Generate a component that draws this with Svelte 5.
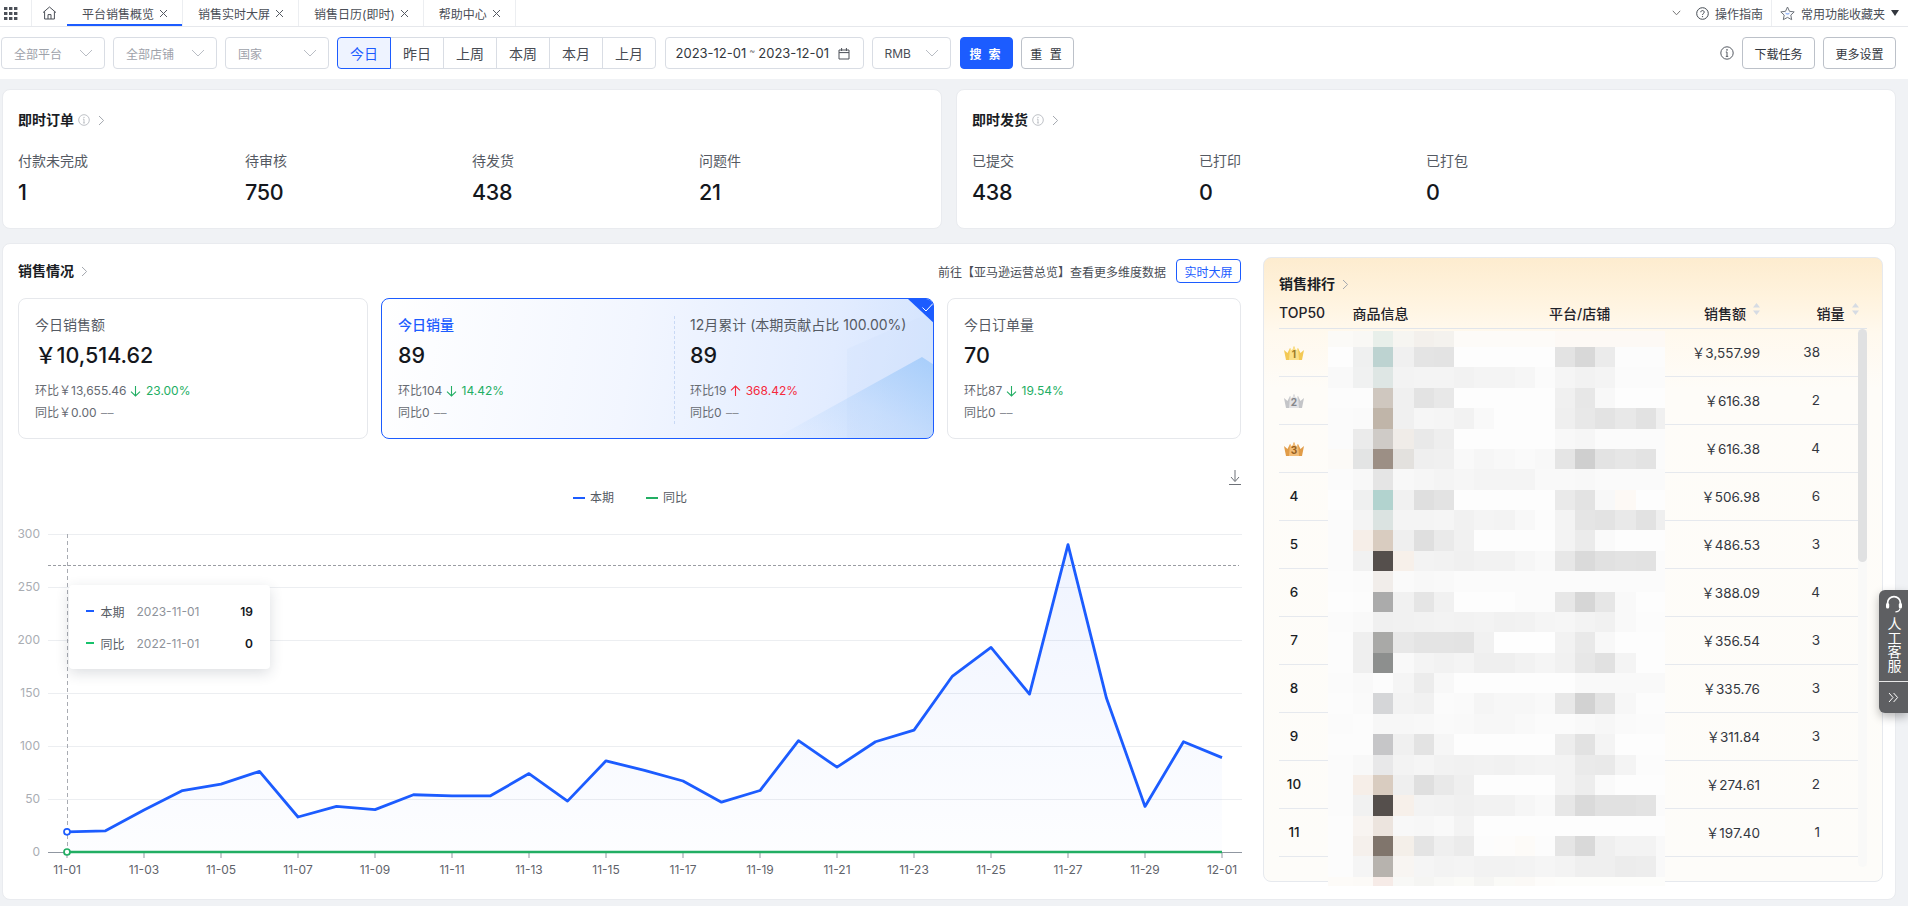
<script>
  const tabs = [
    { t: '平台销售概览', on: true },
    { t: '销售实时大屏' },
    { t: '销售日历(即时)' },
    { t: '帮助中心' }
  ];
  const ranges = ['今日', '昨日', '上周', '本周', '本月', '上月'];
  const orders = [['付款未完成', '1'], ['待审核', '750'], ['待发货', '438'], ['问题件', '21']];
  const ships = [['已提交', '438'], ['已打印', '0'], ['已打包', '0']];
  const vals = [19,20,39.6,58,64,76,33,43,40,54,53,53,74,48,86,77,67,47,58,105,80,104,115,166,193,149,290,145,43,104,89];
  const X0 = 67, STEP = 38.5, Y0 = 852, K = 1.06;
  const px = (i) => X0 + i * STEP;
  const py = (v) => Y0 - v * K;
  const line = vals.map((v, i) => `${px(i)},${py(v)}`).join(' ');
  const area = `${px(0)},${Y0} ${line} ${px(30)},${Y0}`;
  const yTicks = [0, 50, 100, 150, 200, 250, 300];
  const xLabels = ['11-01','11-03','11-05','11-07','11-09','11-11','11-13','11-15','11-17','11-19','11-21','11-23','11-25','11-27','11-29','12-01'];
  const xTickAt = xLabels.map((_, i) => i * 2);
  const rows = [
    { r: 1, a: '3,557.99', n: 38 }, { r: 2, a: '616.38', n: 2 }, { r: 3, a: '616.38', n: 4 },
    { r: 4, a: '506.98', n: 6 }, { r: 5, a: '486.53', n: 3 }, { r: 6, a: '388.09', n: 4 },
    { r: 7, a: '356.54', n: 3 }, { r: 8, a: '335.76', n: 3 }, { r: 9, a: '311.84', n: 3 },
    { r: 10, a: '274.61', n: 2 }, { r: 11, a: '197.40', n: 1 }
  ];
  const crown = { 1: ['#fae08a', '#f3c955', '#9a7a26'], 2: ['#e2e2e4', '#c4c5c8', '#85868a'], 3: ['#f2bd78', '#e19c48', '#96601e'] };
  const mosaicSrc = [
    'fbfaf7 f9f8f5 e8efea f6f5f1 f3f0ec f4f2ee fdfbf8 fdfbf8 fdfbf8 fdfbf8 fdfbf8 fdf9f5 fdf9f5 fdf9f5 fdf9f5 fdf9f5 fdf9f5',
    'fd eff0f0 bdd3d1 f0 e4 e3 fd fd fd fd fd e3 d8 eb fc fc fc',
    'f9 f0f1f1 dee6e4 f3 f4 f4 f2 f4 f4 f6 fb f5 f2 f4 fb fb fb',
    'fc fc cfc7bf f0 e3 e8 fd fd fd fd fd f0 e7 f8 fd fd fd',
    'fb fa c0b5a9 f0 f6 f5 f2 f9 fd fd fd ef e8 e3 e8 e2 f0',
    'fb eb cfcbc7 f0ece8 e9 ee fd fd fd fd fd f8 f6 fb fb fb fb',
    'fcfaf7 e3e4e4 9c8f85 e3e1de ef f0 f9 f6 f8 fa f8 e5 cf e3 e6 e3 fb',
    'fb f8 e5 f8 f6 f4 f6 f4 f4 f4 f9 f9 f8 fa fa fa fa',
    'fd eff0f0 b2d3cf f1 df e3 fd fd fd fd fd ea e3 f8 fdf9f5 fd fd',
    'fb f4 dbe3e1 f4 f4 f5 f1 f4 f3 f8 fc f3 e5 e3 e9 e2 ef',
    'fb f6eee8 d9ccc0 ef df ea f1 fd fd fd fd f3 eb fa fd fd fd',
    'fb f1 554f4c f7f0ea f3 f2 f0 f2 f2 f6 f9 e7 da e1 e3 e2 fb',
    'fc fb f1edea fa f8 f9 fb fb fb fb fb fb fb fb fb fb fb',
    'fd fc ab f1 e5 f1 fd fd fd fb fb e7 d6 e6 f9 fd fd',
    'fb f9 f0 f1 f2 f3 f2 f3 f1 f2 f5 f6 f3 f1 f9 fc fc',
    'fc ef a9a9a7 e8 e4 e4 e3 f1 fe fe fe f2 e9 f8 fd fd fd',
    'fc ef 8d8f8e f9 f4 f2 f4 ef ef f2 f5 f1 e7 e1 f4 fd fd',
    'fb f9 fc f5 ec f8 fd fd fd fd fd fd f9 f9 f9 f9 f9',
    'fc fa d5d6d8 f3 f1 fb fa f5 f7 f7 f9 e8 d2 e3 f7 fc fc',
    'fb fc f7 f7 f8 fa f9 f7 f7 f9 fb fb f9 f7 fa fb fb',
    'fc fc c6c6c8 f0 e3 f6 fd fd fd fd fd ed e2 f4 fd fd fd',
    'fb f8 e8e8e9 f3 f5 f2 f1 f2 f1 f3 f4 f3 ea e9 f4 fc fc',
    'fb f6eee8 d9ccc0 ef df e9 ef fd fd fd fd f3 ed fa fd fd fd',
    'fb f1 554f4c f7f0ea f3 f2 f0 f2 f2 f6 f9 e7 da e1 e1 e3 fb',
    'fc f8f4f1 ece4de f8 f7 f9 f3 fd fd fd fd fd fd fd fd fd fd',
    'fc f5f0ec 80756c f4efe9 e4 ef eb fc fdfcfb fdfbf8 fc e5 d9 ef f3 f3 f9',
    'fc f5 b7b3ae f8f5f2 f5 f3 f4 f2 f2 f3 f5 f3 ef ef ec ed f9',
    'fdfbf8 fcfaf7 f6ebe7 f8f8f6 f5f5f3 f8f8f6 fafaf7 f5f5f3 fafaf7 fbf9f6 fdfcfa fdfdfb fdfdfb fdfdfb fdfdfb fdfdfb fdfdfb'
  ];
  const hex = (tk) => (tk.length === 2 ? `#${tk}${tk}${tk}` : `#${tk}`);
  const mosaic = mosaicSrc.flatMap((r) => r.split(' ').map(hex));
</script>

{#snippet chev()}
  <svg class="chev" width="7" height="11" viewBox="0 0 7 11"><path d="M1 1l4.6 4.5L1 10" fill="none" stroke="#a4a8af" stroke-width="1"/></svg>
{/snippet}
{#snippet info(size = 12, color = '#b4b8be')}
  <svg width={size} height={size} viewBox="0 0 14 14"><circle cx="7" cy="7" r="6.2" fill="none" stroke={color}/><path d="M7 6v4.2M5.8 10.4h2.4M5.8 6h1.2" fill="none" stroke={color}/><circle cx="7" cy="3.9" r=".8" fill={color}/></svg>
{/snippet}
{#snippet down()}
  <svg class="arr" width="11" height="12" viewBox="0 0 11 12"><path d="M5.5 1v10M1 6.6l4.5 4.4L10 6.6" fill="none" stroke="#22ae63" stroke-width="1.1"/></svg>
{/snippet}
{#snippet up()}
  <svg class="arr" width="11" height="12" viewBox="0 0 11 12"><path d="M5.5 11V1M1 5.4L5.5 1 10 5.4" fill="none" stroke="#f5293d" stroke-width="1.1"/></svg>
{/snippet}
{#snippet caret()}
  <svg width="14" height="8" viewBox="0 0 14 8"><path d="M1 1l6 6 6-6" fill="none" stroke="#b9bdc4" stroke-width="1"/></svg>
{/snippet}
{#snippet sort()}
  <svg class="sort" width="7" height="12" viewBox="0 0 7 12"><path d="M3.5 0L7 4.4H0zM3.5 12L0 7.6h7z" fill="#d6dbe3"/></svg>
{/snippet}

<div class="page">
  <header class="topbar">
    <div class="appicon">
      <svg width="14" height="13" viewBox="0 0 14 13" fill="#4c5058">
        <rect x="0" y="0" width="3.4" height="3"/><rect x="5" y="0" width="3.4" height="3"/><rect x="10" y="0" width="3.4" height="3"/>
        <rect x="0" y="5" width="3.4" height="3"/><rect x="5" y="5" width="3.4" height="3"/><rect x="10" y="5" width="3.4" height="3"/>
        <rect x="0" y="10" width="3.4" height="3"/><rect x="5" y="10" width="3.4" height="3"/><rect x="10" y="10" width="3.4" height="3"/>
      </svg>
    </div>
    <div class="homeicon">
      <svg width="15" height="14" viewBox="0 0 15 14"><path d="M1 6.6L7.5 1 14 6.6M2.6 5.4V13h9.8V5.4M6 13V8.6h3V13" fill="none" stroke="#4c5058" stroke-width="1"/></svg>
    </div>
    {#each tabs as tab}
      <div class="tab" class:on={tab.on}>
        <span>{tab.t}</span>
        <svg width="9" height="9" viewBox="0 0 9 9"><path d="M1 1l7 7M8 1L1 8" stroke="#555a62" stroke-width="1"/></svg>
      </div>
    {/each}
    <div class="topright">
      <svg class="tchev" width="9" height="6" viewBox="0 0 9 6"><path d="M.8.8l3.7 4 3.7-4" fill="none" stroke="#777" stroke-width="1"/></svg>
      <span class="guide">
        <svg width="13" height="13" viewBox="0 0 13 13"><circle cx="6.5" cy="6.5" r="5.8" fill="none" stroke="#444a52"/><path d="M4.8 5.2c0-2.2 3.4-2.2 3.4 0 0 1.3-1.7 1.3-1.7 2.8" fill="none" stroke="#444a52"/><circle cx="6.5" cy="9.6" r=".7" fill="#444a52"/></svg>
        操作指南
      </span>
      <span class="fav">
        <svg width="15" height="15" viewBox="0 0 15 15"><path d="M7.5 1l2 4.3 4.7.6-3.4 3.2.9 4.6-4.2-2.3-4.2 2.3.9-4.6L.8 5.9l4.7-.6z" fill="#fafbfd" stroke="#6f747b" stroke-width="1"/><path d="M5.6 7.2c.9 1 2.9 1 3.8 0" fill="none" stroke="#5a8cf5" stroke-width="1"/></svg>
        常用功能收藏夹
        <svg width="8" height="6" viewBox="0 0 8 6"><path d="M0 0h8L4 6z" fill="#33373e"/></svg>
      </span>
    </div>
  </header>

  <div class="toolbar">
    <div class="select ph"><span>全部平台</span>{@render caret()}</div>
    <div class="select ph"><span>全部店铺</span>{@render caret()}</div>
    <div class="select ph"><span>国家</span>{@render caret()}</div>
    <div class="seg">
      {#each ranges as r, i}
        <div class="segitem" class:on={i === 0}>{r}</div>
      {/each}
    </div>
    <div class="date">
      <span>2023-12-01</span><i>~</i><span>2023-12-01</span>
      <svg width="12" height="13" viewBox="0 0 12 13"><path d="M1 3h10v9H1zM1 5.6h10M3.6 1v3M8.4 1v3" fill="none" stroke="#4c5058"/></svg>
    </div>
    <div class="select rmb"><span>RMB</span>{@render caret()}</div>
    <button class="btn primary">搜 索</button>
    <button class="btn spaced">重 置</button>
    <div class="tool-right">
      {@render info(14, '#555a62')}
      <button class="btn wide">下载任务</button>
      <button class="btn wide">更多设置</button>
    </div>
  </div>

  <div class="summary">
    <section class="card">
      <h3>即时订单 <span class="ic">{@render info()}</span>{@render chev()}</h3>
      <div class="stats">
        {#each orders as o}
          <div class="stat"><div class="lab">{o[0]}</div><div class="num">{o[1]}</div></div>
        {/each}
      </div>
    </section>
    <section class="card">
      <h3>即时发货 <span class="ic">{@render info()}</span>{@render chev()}</h3>
      <div class="stats">
        {#each ships as o}
          <div class="stat"><div class="lab">{o[0]}</div><div class="num">{o[1]}</div></div>
        {/each}
      </div>
    </section>
  </div>

  <section class="sales">
    <div class="leftcol">
      <div class="saleshead">
        <h3>销售情况 {@render chev()}</h3>
        <div class="goto">
          <span>前往【亚马逊运营总览】查看更多维度数据</span>
          <button class="live">实时大屏</button>
        </div>
      </div>
      <div class="kpis">
        <div class="kpi">
          <div class="kt">今日销售额</div>
          <div class="kv">￥10,514.62</div>
          <div class="ks first">环比￥13,655.46 {@render down()}<b class="g">23.00%</b></div>
          <div class="ks">同比￥0.00 <em>––</em></div>
        </div>
        <div class="kpi active">
          <svg class="deco" width="552" height="141" viewBox="0 0 552 141" preserveAspectRatio="none">
            <defs>
              <linearGradient id="dg" x1="0" y1="1" x2="1" y2="0"><stop offset="0" stop-color="#9cc8fa" stop-opacity="0"/><stop offset=".5" stop-color="#9cc8fa" stop-opacity=".28"/><stop offset="1" stop-color="#9cc8fa" stop-opacity=".8"/></linearGradient>
            </defs>
            <path d="M465 50L552 12V141H465z" fill="#cfe2fd" opacity=".3"/>
            <path d="M390 141L540 58 552 66V141z" fill="url(#dg)"/>
            <path d="M526 0h27v25z" fill="#1c5cff"/>
            <path d="M540.5 8.5l3.5 3.5 6.5-7" fill="none" stroke="#fff" stroke-width="1"/>
          </svg>
          <div class="kcol left">
            <div class="kt blue">今日销量</div>
            <div class="kv">89</div>
            <div class="ks first">环比104 {@render down()}<b class="g">14.42%</b></div>
            <div class="ks">同比0 <em>––</em></div>
          </div>
          <div class="kcol right">
            <div class="kt">12月累计 (本期贡献占比 100.00%)</div>
            <div class="kv">89</div>
            <div class="ks first">环比19 {@render up()}<b class="r">368.42%</b></div>
            <div class="ks">同比0 <em>––</em></div>
          </div>
        </div>
        <div class="kpi">
          <div class="kt">今日订单量</div>
          <div class="kv">70</div>
          <div class="ks first">环比87 {@render down()}<b class="g">19.54%</b></div>
          <div class="ks">同比0 <em>––</em></div>
        </div>
      </div>
      <div class="chart">
        <svg width="1225" height="461" viewBox="18 439 1225 461">
          <defs>
            <linearGradient id="af" x1="0" y1="0" x2="0" y2="1"><stop offset="0" stop-color="#1c5cff" stop-opacity=".07"/><stop offset="1" stop-color="#1c5cff" stop-opacity=".01"/></linearGradient>
          </defs>
          <path d="M1235 470v11M1231 477l4 4.6 4-4.6M1229 484.5h12" fill="none" stroke="#6d7178" stroke-width="1"/>
          <rect x="573" y="497" width="12" height="2" fill="#1c5cff"/>
          <text x="590" y="502" class="lg">本期</text>
          <rect x="646" y="497" width="12" height="2" fill="#22ae63"/>
          <text x="663" y="502" class="lg">同比</text>
          {#each yTicks as t}
            {#if t > 0}<line x1="48" x2="1242" y1={Y0 - t * K + .5} y2={Y0 - t * K + .5} stroke="#eceef1"/>{/if}
            <text x="40" y={Y0 - t * K + 4} class="yl" text-anchor="end">{t}</text>
          {/each}
          <line x1="48" x2="1239" y1="565.5" y2="565.5" stroke="#9a9da3" stroke-dasharray="3 2"/>
          <polygon points={area} fill="url(#af)"/>
          <line x1="67.5" x2="67.5" y1="534" y2="852" stroke="#a8abb2" stroke-dasharray="4 3"/>
          <line x1="48" x2="1242" y1="852.5" y2="852.5" stroke="#9097a1"/>
          {#each xTickAt as i, k}
            <line x1={px(i)} x2={px(i)} y1="853" y2="858" stroke="#9097a1"/>
            <text x={px(i)} y="874" class="xl" text-anchor="middle">{xLabels[k]}</text>
          {/each}
          <polyline points={line} fill="none" stroke="#1c5cff" stroke-width="2.8" stroke-linejoin="round"/>
          <line x1={px(0)} x2={px(30)} y1="852" y2="852" stroke="#22ae63" stroke-width="2.6"/>
          <circle cx={px(0)} cy={py(19)} r="3" fill="#fff" stroke="#1c5cff" stroke-width="1.7"/>
          <circle cx={px(0)} cy={Y0} r="3" fill="#fff" stroke="#22ae63" stroke-width="1.7"/>
        </svg>
        <div class="tip">
          <div class="tr"><i class="blue-bar"></i><span class="tn">本期</span><span class="td">2023-11-01</span><b>19</b></div>
          <div class="tr"><i class="green-bar"></i><span class="tn">同比</span><span class="td">2022-11-01</span><b>0</b></div>
        </div>
      </div>
    </div>

    <aside class="rank">
      <h3>销售排行 {@render chev()}</h3>
      <div class="thead">
        <span>TOP50</span><span>商品信息</span><span>平台/店铺</span>
        <span>销售额 {@render sort()}</span><span>销量 {@render sort()}</span>
      </div>
      <div class="tbody">
        <div class="trows">
          {#each rows as row}
            <div class="trow">
              <div class="rk">
                {#if row.r <= 3}
                  <svg width="22" height="16" viewBox="0 0 22 16">
                    <path d="M1 5L4.5 8 7 3 9 6 11 1 13 6 15 3 17.5 8 21 5 19 15H3z" fill={crown[row.r][1]}/>
                    <path d="M7 3L9 6 11 1 13 6 15 3 16 15H6z" fill={crown[row.r][0]}/>
                    <text x="11" y="13.4" text-anchor="middle" class="cn" fill={crown[row.r][2]}>{row.r}</text>
                  </svg>
                {:else}
                  {row.r}
                {/if}
              </div>
              <div class="amt">￥{row.a}</div>
              <div class="cnt">{row.n}</div>
            </div>
          {/each}
        </div>
        <div class="track"><div class="thumb"></div></div>
      </div>
    </aside>

    <div class="mosaic">
      {#each mosaic as c}
        <div style="background:{c}"></div>
      {/each}
    </div>
  </section>

  <div class="service">
    <div class="svc">
      <svg width="18" height="19" viewBox="0 0 18 19"><path d="M2.6 11V8a6.4 6.4 0 0 1 12.8 0v3" fill="none" stroke="#fff" stroke-width="1.7"/><rect x="1" y="8" width="3.2" height="5.6" rx="1.5" fill="#fff"/><rect x="13.8" y="8" width="3.2" height="5.6" rx="1.5" fill="#fff"/><path d="M15 13.6c-.4 2.2-2.2 3.2-4.6 3.2" fill="none" stroke="#fff" stroke-width="1.2"/></svg>
      <span>人工客服</span>
    </div>
    <div class="fold">
      <svg width="11" height="11" viewBox="0 0 11 11"><path d="M1 1l4 4.5L1 10M5.6 1l4 4.5-4 4.5" fill="none" stroke="#fff" stroke-width="1"/></svg>
    </div>
  </div>
</div>

<style>
  :global(body) { margin: 0; }
  .page {
    position: relative;
    width: 1908px;
    height: 906px;
    overflow: hidden;
    background: #f0f2f5;
    font-family: Inter, "Noto Sans CJK SC", sans-serif;
    color: #1a1d24;
    box-sizing: border-box;
  }
  h3 {
    margin: 0;
    display: flex;
    align-items: center;
    font-size: 14px;
    line-height: 18px;
    font-weight: 600;
    color: #1a1d24;
  }
  .chev { margin-left: 7px; }
  .ic { display: inline-flex; margin-left: 4px; margin-right: 1px; }

  .topbar {
    display: flex;
    align-items: stretch;
    height: 27px;
    box-sizing: border-box;
    background: #fff;
    border-bottom: 1px solid #e6e8ec;
    font-size: 12px;
    color: #4a4e56;
  }
  .appicon { width: 32px; box-sizing: border-box; border-right: 1px solid #eceef1; display: flex; align-items: center; padding-left: 4px; }
  .homeicon { width: 35px; display: flex; align-items: center; justify-content: center; }
  .tab {
    display: flex;
    align-items: center;
    gap: 5px;
    padding: 0 14px 0 15px;
    border-right: 1px solid #eceef1;
    height: 26px;
    box-sizing: border-box;
    white-space: nowrap;
  }
  .tab.on { box-shadow: inset 0 -2px 0 #1c5cff; }
  .topright { margin-left: auto; display: flex; align-items: center; padding-right: 9px; }
  .tchev { margin-right: 15px; }
  .guide { display: flex; align-items: center; gap: 6px; padding-right: 8px; border-right: 1px solid #eceef1; height: 26px; }
  .fav { display: flex; align-items: center; gap: 6px; padding-left: 8px; }

  .toolbar {
    display: flex;
    align-items: center;
    height: 52px;
    box-sizing: border-box;
    padding: 0 12px 0 1px;
    background: #fff;
    font-size: 12px;
  }
  .select {
    display: flex;
    align-items: center;
    justify-content: space-between;
    width: 103.5px;
    height: 32px;
    margin-right: 8.5px;
    box-sizing: border-box;
    padding: 0 11px 0 12px;
    border: 1px solid #d9dde4;
    border-radius: 4px;
    color: #9ea2aa;
  }
  .rmb { width: 79px; margin-left: 8px; color: #4a4e56; margin-right: 9px; }
  .seg { display: flex; height: 32px; border-radius: 4px; }
  .segitem {
    width: 54px;
    display: flex;
    align-items: center;
    justify-content: center;
    box-sizing: border-box;
    margin-left: -1px;
    border: 1px solid #d9dde4;
    font-size: 14px;
    color: #474b53;
  }
  .segitem:first-child { margin-left: 0; border-radius: 4px 0 0 4px; }
  .segitem:last-child { border-radius: 0 4px 4px 0; }
  .segitem.on { background: #eef3ff; border-color: #1c5cff; color: #1c5cff; position: relative; z-index: 1; }
  .date {
    display: flex;
    align-items: center;
    width: 199px;
    height: 32px;
    margin-left: 8.5px;
    box-sizing: border-box;
    padding: 0 10px;
    border: 1px solid #d9dde4;
    border-radius: 4px;
    font-size: 13px;
    color: #33373e;
    white-space: nowrap;
  }
  .date i { font-style: normal; font-size: 9px; width: 12px; text-align: center; position: relative; top: -3px; color: #777; }
  .date svg { margin-left: auto; margin-right: 3px; }
  .btn {
    height: 32px;
    width: 53px;
    padding: 0;
    box-sizing: border-box;
    border: 1px solid #bcc1c9;
    border-radius: 4px;
    background: #fff;
    font: inherit;
    font-size: 12px;
    color: #33373e;
    margin-right: 8px;
  }
  .btn.primary { background: #1c5cff; border-color: #1c5cff; color: #fff; font-weight: 600; letter-spacing: 2px; }
  .btn.spaced { letter-spacing: 2px; }
  .btn.wide { width: 73px; margin-right: 0; }
  .tool-right { margin-left: auto; display: flex; align-items: center; gap: 8px; }

  .summary {
    display: grid;
    grid-template-columns: 940px 940px;
    column-gap: 14px;
    margin: 10px 0 0 2px;
  }
  .card {
    height: 140px;
    box-sizing: border-box;
    padding: 21px 15px 0;
    background: #fff;
    border: 1px solid #e9ebef;
    border-radius: 8px;
  }
  .stats { display: grid; grid-template-columns: repeat(4, 227px); margin-top: 22px; }
  .lab { font-size: 14px; line-height: 20px; color: #555a63; }
  .num { font-size: 21.5px; line-height: 28px; margin-top: 7px; font-weight: 500; color: #14171d; letter-spacing: -.3px; }

  .sales {
    position: relative;
    display: flex;
    align-items: flex-start;
    width: 1894px;
    height: 657px;
    margin: 14px 0 0 2px;
    box-sizing: border-box;
    padding-left: 15px;
    background: #fff;
    border: 1px solid #e9ebef;
    border-radius: 8px;
  }
  .leftcol { width: 1223px; flex: none; }
  .saleshead { display: flex; justify-content: space-between; align-items: center; height: 54px; }
  .goto { display: flex; align-items: center; gap: 10px; font-size: 12px; color: #4a4e56; }
  .live {
    width: 65px;
    height: 24px;
    padding: 0;
    background: #fff;
    border: 1px solid #1c5cff;
    border-radius: 4px;
    font: inherit;
    font-size: 12px;
    color: #1c5cff;
  }
  .kpis { display: grid; grid-template-columns: 350px 553px 294px; column-gap: 13px; height: 141px; }
  .kpi {
    position: relative;
    box-sizing: border-box;
    padding: 17px 16px 0;
    border: 1px solid #e6e8ec;
    border-radius: 8px;
    overflow: hidden;
  }
  .kpi.active {
    display: flex;
    border-color: #1c5cff;
    background: linear-gradient(100deg, #ffffff 0%, #f2f6ff 45%, #e2ecff 80%, #d2e3fe 100%);
  }
  .deco { position: absolute; left: 0; top: 0; }
  .kcol { position: relative; }
  .kcol.left { width: 276px; flex: none; }
  .kcol.right { flex: 1; border-left: 1px dashed #c9d9f5; padding-left: 15px; height: 108px; }
  .kt { font-size: 14px; line-height: 18px; color: #555a63; white-space: nowrap; }
  .kt.blue { color: #1c5cff; font-weight: 500; }
  .kv { font-size: 21.5px; line-height: 28px; margin-top: 7px; font-weight: 500; color: #14171d; white-space: nowrap; }
  .ks { display: flex; align-items: center; font-size: 12px; line-height: 20px; margin-top: 2px; color: #666a72; white-space: pre; }
  .ks.first { margin-top: 12px; }
  .ks em { font-style: normal; margin-left: 1px; letter-spacing: .5px; color: #8c9097; }
  .ks b { font-weight: 400; }
  .g { color: #22ae63; }
  .r { color: #f5293d; }
  .arr { margin: 0 5px 0 0; }

  .chart { position: relative; width: 1225px; height: 461px; }
  .chart svg { display: block; }
  .lg { font-size: 12px; fill: #555a63; }
  .yl { font-size: 12px; fill: #a9adb3; }
  .xl { font-size: 12px; fill: #5f636b; }
  .tip {
    position: absolute;
    left: 50.5px;
    top: 146px;
    width: 201.5px;
    height: 84px;
    box-sizing: border-box;
    padding: 10px 17px 0 17px;
    background: #fff;
    border-radius: 4px;
    box-shadow: 0 4px 14px rgba(40, 50, 70, .16);
    font-size: 12px;
  }
  .tr { display: flex; align-items: center; height: 32px; }
  .tr i { width: 8px; height: 2px; margin-right: 7px; flex: none; }
  .blue-bar { background: #1c5cff; }
  .green-bar { background: #17c26b; }
  .tn { color: #555a63; width: 36px; flex: none; }
  .td { color: #8e929a; }
  .tr b { margin-left: auto; font-weight: 600; color: #14171d; }

  .rank {
    width: 620.5px;
    height: 625px;
    margin: 13px 0 0 21.5px;
    box-sizing: border-box;
    padding: 17px 0 0 15.5px;
    border: 1px solid #e6e9ee;
    border-radius: 8px;
    flex: none;
    background: linear-gradient(180deg, #fdeccf 0, #fff3de 40px, #fff9ee 75px, #fefcf8 130px, #fdfcf9 100%);
  }
  .thead {
    display: grid;
    grid-template-columns: 73.6px 196.4px 155px 112.6px 50px;
    align-items: center;
    width: 588px;
    height: 32px;
    margin-top: 4px;
    box-sizing: border-box;
    border-bottom: 1px solid #e1e5ea;
    font-size: 14px;
    font-weight: 500;
    color: #1f2229;
  }
  .thead span { white-space: nowrap; display: flex; align-items: center; }
  .thead span:first-child { font-size: 14px; }
  .sort { margin-left: 7px; margin-top: -7px; }
  .tbody { display: flex; width: 588px; height: 539px; overflow: hidden; }
  .trows { width: 578.5px; flex: none; }
  .trow {
    display: grid;
    grid-template-columns: 30px 451px 60px;
    align-items: center;
    height: 48px;
    padding-bottom: 1px;
    box-sizing: border-box;
    border-bottom: 1px solid #e6e9ee;
    font-size: 13.5px;
    color: #33373e;
    white-space: nowrap;
  }
  .rk { display: flex; justify-content: center; font-weight: 500; color: #1a1d24; }
  .rk svg { margin-top: 2px; }
  .cn { font-size: 10px; font-weight: 700; font-family: Inter, sans-serif; }
  .amt { text-align: right; }
  .cnt { text-align: right; }
  .track { flex: 1; background: #f9f9f8; border-radius: 5px; height: 538px; }
  .thumb { height: 233px; background: #e0e1e2; border-radius: 5px; }

  .mosaic {
    position: absolute;
    left: 1325px;
    top: 87px;
    display: grid;
    grid-template-columns: 25px repeat(15, 20.2px) 8.7px;
    grid-template-rows: 16px repeat(26, 20.38px) 9px;
  }

  .service {
    position: absolute;
    right: 0;
    top: 590px;
    width: 29px;
    height: 123px;
    border-radius: 6px 0 0 6px;
    background: #5e5f62;
    box-shadow: 0 4px 10px rgba(0, 0, 0, .28);
    color: #fff;
  }
  .svc {
    display: flex;
    flex-direction: column;
    align-items: center;
    height: 92px;
    padding-top: 5px;
    box-sizing: border-box;
    border-bottom: 1px solid #e8e8e8;
  }
  .svc span { writing-mode: vertical-rl; font-size: 14px; line-height: 14px; margin-top: 3px; }
  .fold { display: flex; justify-content: center; align-items: center; height: 31px; }
</style>
